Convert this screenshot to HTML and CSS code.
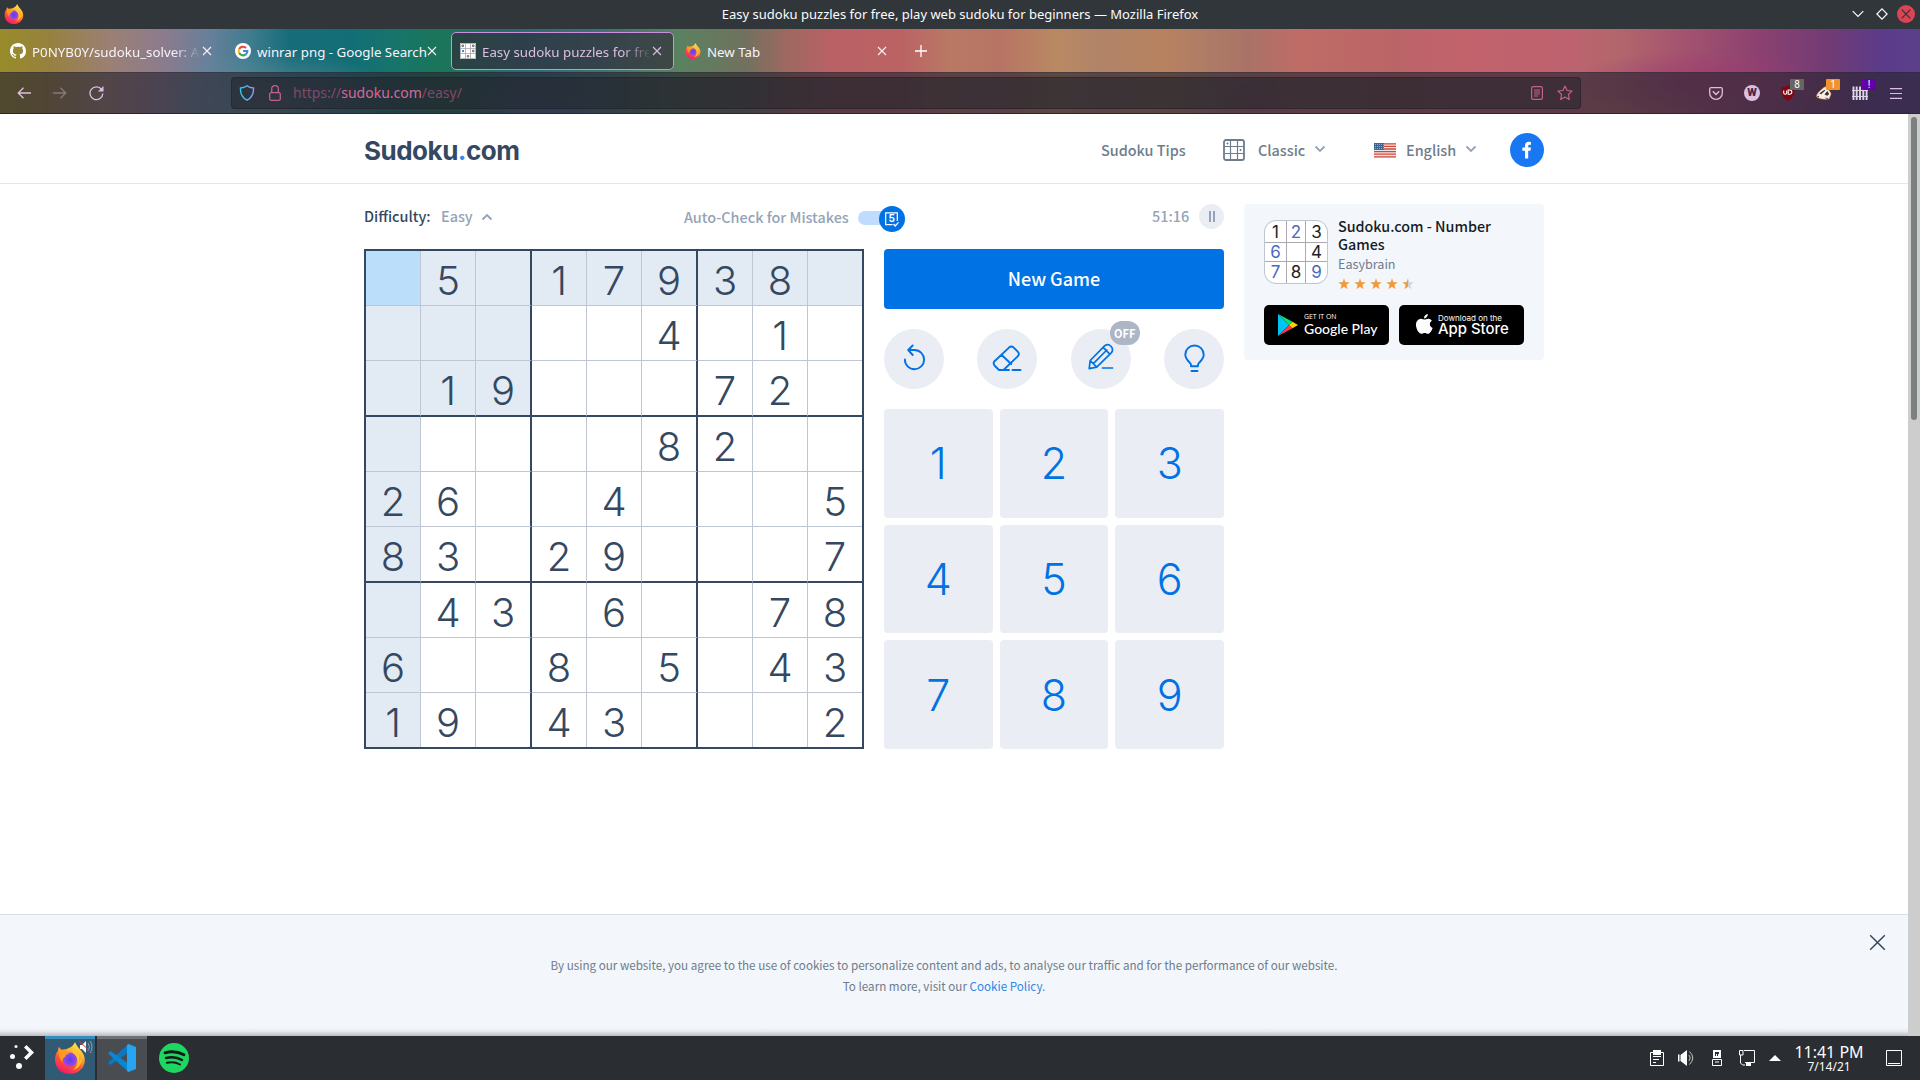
FILE: index.html
```html
<!DOCTYPE html>
<html lang="en">
<head>
<meta charset="utf-8">
<title>Easy sudoku puzzles for free, play web sudoku for beginners</title>
<link rel="stylesheet" href="styles.css">
</head>
<body>
<svg class="defs" width="0" height="0" aria-hidden="true">
  <defs>
    <linearGradient id="foxBody" x1="0.8" y1="0" x2="0.3" y2="1"><stop offset="0" stop-color="#fff44f"/><stop offset="0.35" stop-color="#ffb02a"/><stop offset="0.65" stop-color="#ff5634"/><stop offset="1" stop-color="#f5156c"/></linearGradient>
    <radialGradient id="foxGlobe"><stop offset="0" stop-color="#5a3fe0"/><stop offset="1" stop-color="#9b48f0"/></radialGradient>
    <symbol id="firefox" viewBox="0 0 32 32">
      <path fill="url(#foxBody)" d="M21 0c1 3 3 5 5.500 8 3.500 4 5 8 4 13-1.500 6.500-7.500 11-14.500 11C7.500 32 1 26 1 17.500c0-3.500 1-6.500 3-9 0-1 .4-2.500 1-3.500l2.500 3c1.300-.7 3-1 4.500-.8C15 6 19 5 21 0z"/>
      <circle cx="16" cy="17.500" r="7" fill="url(#foxGlobe)"/>
      <path fill="#ff9a1f" d="M5 8c4-1 8 0 10.500 3.500-3 .5-4 1.500-4 3-2 1-3.500 3-3 6C6 18 4 13 5 8z"/>
      <path fill="#ffc42e" d="M19 7c5 3 7.500 8 6 13 2-2 2.500-4 2.500-6 1.500 7-3 13-9 14 7-4 6.500-13 .5-17z"/>
    </symbol>
    <symbol id="close" viewBox="0 0 10 10"><path d="M1 1l8 8M9 1L1 9" fill="none" stroke="currentColor" stroke-width="1.100"/></symbol>
    <symbol id="chev" viewBox="0 0 12 8"><path d="M1.500 1.500L6 6l4.500-4.500" fill="none" stroke="currentColor" stroke-width="1.800"/></symbol>
    <symbol id="star" viewBox="0 0 12 12"><path d="M6 .3l1.450 4h4.200L8.300 6.900l1.250 4.300L6 8.700l-3.550 2.500L3.700 6.900.35 4.300h4.200z"/></symbol>
  </defs>
</svg>

<header class="titlebar">
  <svg class="app-icon" width="20" height="20"><use href="#firefox"/></svg>
  <span class="window-title">Easy sudoku puzzles for free, play web sudoku for beginners — Mozilla Firefox</span>
  <div class="window-controls">
    <svg width="12" height="8" viewBox="0 0 12 8"><path d="M.7 1.200L6 6.500l5.300-5.300" fill="none" stroke="#fcfcfc" stroke-width="1.200"/></svg>
    <svg width="12" height="12" viewBox="0 0 12 12"><path d="M6 .9L11.100 6 6 11.100.9 6z" fill="none" stroke="#fcfcfc" stroke-width="1.200"/></svg>
    <svg class="window-close" width="18" height="18" viewBox="0 0 18 18"><circle cx="9" cy="9" r="9" fill="#da4453"/><path d="M4.700 4.700l8.600 8.600M13.300 4.700l-8.600 8.600" stroke="#2f3439" stroke-width="1.200"/></svg>
  </div>
</header>

<section class="browser">
  <nav class="tabs">
    <div class="tab">
      <svg width="16" height="16" viewBox="0 0 16 16"><path fill="#fff" d="M8 0C3.580 0 0 3.580 0 8c0 3.540 2.290 6.530 5.470 7.590.4.070.55-.17.55-.38 0-.19-.01-.82-.01-1.490-2.010.37-2.530-.49-2.690-.94-.09-.23-.48-.94-.82-1.130-.28-.15-.68-.52-.01-.53.63-.01 1.080.58 1.230.82.72 1.210 1.870.87 2.330.66.070-.52.280-.87.510-1.070-1.780-.2-3.640-.89-3.640-3.950 0-.87.310-1.590.820-2.150-.08-.2-.36-1.020.080-2.120 0 0 .67-.21 2.200.82.640-.18 1.320-.27 2-.27s1.360.090 2 .27c1.530-1.040 2.200-.82 2.200-.82.440 1.100.160 1.920.080 2.120.51.560.82 1.270.82 2.150 0 3.070-1.870 3.750-3.650 3.950.290.250.540.730.540 1.480 0 1.070-.01 1.930-.01 2.200 0 .21.150.46.550.38A8.010 8.010 0 0016 8c0-4.420-3.580-8-8-8z"/></svg>
      <span class="tab-label fade">P0NYB0Y/sudoku_solver: A</span>
      <svg class="tab-close" width="10" height="10"><use href="#close"/></svg>
    </div>
    <div class="tab">
      <svg width="16" height="16" viewBox="0 0 16 16"><circle cx="8" cy="8" r="8" fill="#fff"/><g fill="none" stroke-width="2.100"><path stroke="#ea4335" d="M4.200 5.900A4.350 4.350 0 0 1 11 4.900"/><path stroke="#fbbc05" d="M4.200 10.100a4.350 4.350 0 0 1 0-4.200"/><path stroke="#34a853" d="M10.800 11.400a4.350 4.350 0 0 1-6.600-1.300"/><path stroke="#4285f4" d="M8 8h4.350a4.350 4.350 0 0 1-1.550 3.400"/></g></svg>
      <span class="tab-label full">winrar png - Google Search</span>
      <svg class="tab-close" width="10" height="10"><use href="#close"/></svg>
    </div>
    <div class="tab active">
      <svg width="16" height="16" viewBox="0 0 16 16"><path fill="#fff" d="M0 0h16v16H0z"/><path d="M.5.500h15v15H.5zM5.500 0v16M10.500 0v16M0 5.500h16M0 10.500h16" fill="none" stroke="#a6a6a6" stroke-width=".8"/><path d="M2 2h1.500v1.500H2zM12.500 2H14v1.500h-1.500zM12.500 7.200H14v1.500h-1.500zM7.200 12.500h1.500V14H7.200z" fill="none" stroke="#666" stroke-width=".9"/><path d="M2 7h2v2H2z" fill="#338de8"/></svg>
      <span class="tab-label fade">Easy sudoku puzzles for fre</span>
      <svg class="tab-close" width="10" height="10"><use href="#close"/></svg>
    </div>
    <div class="tab last-tab">
      <svg width="16" height="16"><use href="#firefox"/></svg>
      <span class="tab-label">New Tab</span>
      <svg class="tab-close" width="10" height="10"><use href="#close"/></svg>
    </div>
    <svg class="new-tab" width="12" height="12" viewBox="0 0 12 12"><path d="M6 0v12M0 6h12" stroke="#fff" stroke-width="1.300"/></svg>
  </nav>
  <div class="toolbar">
    <div class="nav-buttons">
      <svg width="14" height="12" viewBox="0 0 14 12"><path d="M6.500.7L1.200 6l5.300 5.300M1.200 6H14" fill="none" stroke="currentColor" stroke-width="1.300"/></svg>
      <svg class="dim" width="14" height="12" viewBox="0 0 14 12"><path d="M7.500.7L12.800 6l-5.300 5.300M12.800 6H0" fill="none" stroke="currentColor" stroke-width="1.300"/></svg>
      <svg width="15" height="15" viewBox="0 0 15 15"><path d="M12.600 3.500A6.400 6.400 0 1 0 13.800 7.500" fill="none" stroke="currentColor" stroke-width="1.300"/><path d="M14.500 0v5.500H9z" fill="currentColor"/></svg>
    </div>
    <div class="urlbar">
      <svg width="16" height="16" viewBox="0 0 16 16"><linearGradient id="sh" x2="1"><stop stop-color="#34c5f4"/><stop offset="1" stop-color="#9a96ee"/></linearGradient><path d="M8 .8c2 1.600 4 2.100 6.500 2.200.3 6-1.700 10-6.500 12.200C3.200 13 1.200 9 1.500 3 4 2.900 6 2.400 8 .8z" fill="none" stroke="url(#sh)" stroke-width="1.400"/></svg>
      <svg width="12" height="16" viewBox="0 0 12 16"><rect x=".7" y="7.700" width="10.600" height="7.600" rx="1.500" fill="none" stroke="currentColor" stroke-width="1.300"/><path d="M2.700 7.500V4a3.300 3.300 0 0 1 6.600 0v3.500" fill="none" stroke="currentColor" stroke-width="1.300"/></svg>
      <span class="url">https://<b>sudoku.com</b>/easy/</span>
      <svg width="12" height="14" viewBox="0 0 12 14"><rect x=".6" y=".6" width="10.800" height="12.800" rx="1.600" fill="none" stroke="currentColor" stroke-width="1.200"/><path d="M3 4h6M3 6h6M3 8h6M3 10h4" stroke="currentColor"/></svg>
      <svg width="16" height="16" viewBox="0 0 16 16"><path d="M8 1l2.100 4.500 4.900.6-3.600 3.400.9 5L8 12.100l-4.300 2.400.9-5L1 6.100l4.900-.6z" fill="none" stroke="currentColor" stroke-width="1.200" stroke-linejoin="round"/></svg>
    </div>
    <div class="extensions">
      <svg width="14" height="13" viewBox="0 0 14 13"><path d="M2 .7h10q1.300 0 1.300 1.300v4a6.300 6.300 0 0 1-12.600 0V2Q.7.700 2 .7z" fill="none" stroke="currentColor" stroke-width="1.300"/><path d="M3.800 4.300L7 7.500l3.200-3.200" fill="none" stroke="currentColor" stroke-width="1.400"/></svg>
      <span class="ext-w">W</span>
      <div class="ext"><svg width="16" height="16" viewBox="0 0 16 16"><path fill="#800610" d="M8 0c2 1.400 4 2 6.500 2 .4 7-1 11-6.500 14C2.500 13 1.100 9 1.500 2 4 2 6 1.400 8 0z"/><path d="M3.700 5.500v2.200a1.500 1.500 0 0 0 3 0V5.500M8.200 5v4.300h1.500a2.100 2.100 0 0 0 0-4.300z" fill="none" stroke="#fff" stroke-width="1.100"/></svg><i class="badge gray">8</i></div>
      <div class="ext"><svg width="16" height="16" viewBox="0 0 17 16"><path fill="#f4eee7" stroke="#e18a4d" stroke-width=".6" d="M.5 12C1 8 4 6 8 2.500l2-1.500 1 2c2 1 4 3 5 6l-2 5c-4 1-9 1-13.500-2z"/><path fill="#333" d="M3.500 8.500l5.500-4 .8.800-4.300 4zM9 9.500l3-3.500 2 3-2 2zM.5 12l2.500-1v1.500zM9 13l4 .4-1 1z"/></svg><i class="badge orange">1</i></div>
      <div class="ext"><svg width="16" height="16" viewBox="0 0 16 16"><path d="M1.500 1.500V15M4.700 1.500V15M8 1.500V15M11.300 1.500V15M14.600 1.500V15" stroke="#ddd5e3" stroke-width="1.900"/><path d="M0 5.500h16M0 11.500h16" stroke="#ddd5e3" stroke-width="1.100"/></svg><i class="badge purple">!</i></div>
      <svg width="12" height="11" viewBox="0 0 12 11"><path d="M0 .7h12M0 5.500h12M0 10.300h12" stroke="currentColor" stroke-width="1.200"/></svg>
    </div>
  </div>
</section>

<main class="viewport">
  <div class="page">
    <header class="site-header">
      <div class="wrap">
        <span class="logo">Sudoku<em>.</em>com</span>
        <span class="menu tips">Sudoku Tips</span>
        <span class="menu classic"><svg width="22" height="22" viewBox="0 0 22 22"><rect x="1" y="1" width="20" height="20" rx="2" fill="none" stroke="currentColor" stroke-width="1.800"/><path d="M7.500 1v20M14.500 1v20M1 7.500h20M1 14.500h20" stroke="currentColor" stroke-width="1.200"/><path d="M3.500 4.500h2M4.500 3.500v2M16.500 11h2M17.500 10v2" stroke="currentColor"/></svg>Classic<svg class="chev" width="12" height="8"><use href="#chev"/></svg></span>
        <span class="menu english"><svg width="22" height="15" viewBox="0 0 22 15"><path fill="#f4e6e4" d="M0 0h22v15H0z"/><path d="M0 .8h22M0 3.400h22M0 6h22M0 8.600h22M0 11.200h22M0 13.900h22" stroke="#cb4a3e" stroke-width="1.300"/><path fill="#3d6792" d="M0 0h10v7H0z"/><path d="M1 1.500h9M1 3.500h9M1 5.500h9" stroke="#a5bacf" stroke-width=".8" stroke-dasharray="1 1"/></svg>English<svg class="chev" width="12" height="8"><use href="#chev"/></svg></span>
        <svg class="facebook" width="34" height="34" viewBox="0 0 34 34"><circle cx="17" cy="17" r="17" fill="#1877f2"/><path fill="#fff" d="M15 25.500v-7.700h-2.600v-3.200H15v-1.900c0-2.500 1.500-3.900 3.800-3.900l2.200.2v2.700h-1.300c-1.200 0-1.500.7-1.500 1.500v1.400h2.800l-.5 3.200h-2.300v7.700z"/></svg>
      </div>
    </header>
    <div class="wrap content">
      <section class="game">
        <div class="options">
          <span class="difficulty">Difficulty:</span><span class="level">Easy</span><svg class="chev up" width="12" height="8"><use href="#chev"/></svg>
          <span class="autocheck">Auto-Check for Mistakes</span>
          <span class="toggle"><svg width="26" height="26" viewBox="0 0 26 26"><circle cx="13" cy="13" r="13" fill="#0072e3"/><path d="M13.500 18.700H6.700V6.900h11.600v8" fill="none" stroke="#fff" stroke-width="1.200"/><path d="M14.500 18l1.700 2 3.300-3.600" fill="none" stroke="#fff" stroke-width="1.300"/><text x="12.600" y="16.300" text-anchor="middle" class="toggle-digit">5</text></svg></span>
          <span class="timer">51:16</span>
          <span class="pause"><i></i><i></i></span>
        </div>
        <div class="play">
          <div class="board" id="board"></div>
          <div class="controls">
            <div class="new-game">New Game</div>
            <div class="tools">
              <span class="tool"><svg width="60" height="60" viewBox="0 0 60 60"><path d="M20.900 30.500A9.600 9.600 0 1 0 30.500 21H25M28.700 16.500L24.200 21l4.500 5" /></svg></span>
              <span class="tool"><svg width="60" height="60" viewBox="0 0 60 60"><path d="M32 18.600q2.400-2 4.700 0l4 4q2.300 2.400 0 4.700L26.500 41H22l-4.500-4.500q-1.700-2.200 0-4.300zM24.700 26l9.500 9M22 41h10M35.500 41H43.500"/></svg></span>
              <span class="tool pencil"><svg width="60" height="60" viewBox="0 0 60 60"><path d="M18.200 39.700l1-8.200L33.800 16.700q3.400-2.300 6.400.8 2.500 3 .3 6.200L25.700 38.200zM19.200 31.500l6.500 6.700M22.300 34.600L35.800 21M32.200 18.300l6.800 7M18.200 39.700l7.500-1.500M31.500 39H41.500"/></svg><i class="off">OFF</i></span>
              <span class="tool"><svg width="60" height="60" viewBox="0 0 60 60"><path d="M27 37.200v-1.500c0-2-5.700-4.700-5.700-10A9.100 9.100 0 0 1 39.700 25.700c0 5.300-5.700 8-5.700 10v1.500zM27.500 42h6"/></svg></span>
            </div>
            <div class="numpad"><span>1</span><span>2</span><span>3</span><span>4</span><span>5</span><span>6</span><span>7</span><span>8</span><span>9</span></div>
          </div>
        </div>
      </section>
      <aside class="app-card">
        <div class="app-info">
          <div class="mini"><span>1</span><span class="b">2</span><span>3</span><span class="b">6</span><span></span><span>4</span><span class="b">7</span><span>8</span><span class="b">9</span></div>
          <div class="app-text">
            <strong>Sudoku.com - Number Games</strong>
            <span>Easybrain</span>
            <div class="stars"><svg width="12" height="12"><use href="#star"/></svg><svg width="12" height="12"><use href="#star"/></svg><svg width="12" height="12"><use href="#star"/></svg><svg width="12" height="12"><use href="#star"/></svg><svg width="12" height="12" viewBox="0 0 12 12"><linearGradient id="half"><stop offset=".5" stop-color="#f29a38"/><stop offset=".5" stop-color="#ced4e0"/></linearGradient><path fill="url(#half)" d="M6 .3l1.450 4h4.200L8.300 6.900l1.250 4.300L6 8.700l-3.550 2.500L3.700 6.900.35 4.300h4.200z"/></svg></div>
          </div>
        </div>
        <div class="stores">
          <span class="store play-store"><svg width="20" height="22" viewBox="0 0 20 22"><path fill="#00c3f5" d="M0 0v22L11 11z"/><path fill="#00e676" d="M0 0l14.500 7.700L11 11z"/><path fill="#f8394d" d="M0 22l14.500-7.700L11 11z"/><path fill="#ffce00" d="M14.500 7.700L20 11l-5.500 3.300L11 11z"/></svg><span><small>GET IT ON</small><b>Google Play</b></span></span>
          <span class="store app-store"><svg width="17" height="20" viewBox="0 0 17 20"><path fill="#fff" d="M11.800 0c.2 2-1.700 4.500-3.800 4.400C7.800 2.300 9.700.3 11.800 0zM8.700 5.600c.8 0 2-.9 3.600-.8 1.500.1 2.800.8 3.600 1.900-3 1.800-2.600 6 .7 7.200-.8 2.400-2.600 5.800-4.600 5.900-1.300 0-1.700-.8-3.300-.8s-2.100.8-3.300.8C3 19.800 0 15 0 11c0-4 2.500-6.100 4.900-6.200 1.500 0 2.900.8 3.800.8z"/></svg><span><small>Download on the</small><b>App Store</b></span></span>
        </div>
      </aside>
    </div>
    <footer class="cookie">
      <p>By using our website, you agree to the use of cookies to personalize content and ads, to analyse our traffic and for the performance of our website.<br>To learn more, visit our <a>Cookie Policy</a>.</p>
      <svg class="cookie-close" width="17" height="17" viewBox="0 0 17 17"><path d="M1.200 1.200l14.600 14.600M15.800 1.200L1.200 15.800" stroke="#344861" stroke-width="1.500"/></svg>
    </footer>
  </div>
  <div class="scrollbar"><i></i></div>
</main>

<footer class="taskbar">
  <span class="launcher"><svg width="24" height="24" viewBox="0 0 24 24" fill="#fcfcfc"><circle cx="6" cy="3.500" r="1.500"/><circle cx="2.500" cy="13.500" r="2.500"/><circle cx="9" cy="23" r="3"/><path d="M14 4.500L16.500 2l7.500 7.500-7.500 7.500-2.500-2.500 5-5z"/></svg></span>
  <span class="task focus"><svg width="32" height="32"><use href="#firefox"/></svg><svg class="muted" width="15" height="14" viewBox="0 0 15 14"><path fill="#fff" d="M2 5h2l4-4v12L4 9H2z"/><path d="M10 3q3 4 0 8M12 1q4 6 0 12" fill="none" stroke="#8aa0af"/><path d="M1 1l13 12" stroke="#d63b4c"/></svg></span>
  <span class="task"><svg width="28" height="28" viewBox="0 0 28 28"><path d="M0 18.500L20.500 0v8.500L2.500 21z" fill="#0879c2"/><path d="M0 9.500L20.500 28v-8.500L2.500 7z" fill="#0b86d3"/><path d="M20.500 0L28 3v22l-7.500 3-1.500-1V1z" fill="#27a5f3"/></svg></span>
  <span class="spotify"><svg width="30" height="30" viewBox="0 0 30 30"><circle cx="15" cy="15" r="15" fill="#1ed760"/><g fill="none" stroke="#15191c" stroke-linecap="round"><path d="M6 9.800q10-2.800 19 2" stroke-width="2.800"/><path d="M7 15q9-2.300 16 2" stroke-width="2.400"/><path d="M7.800 19.800q7.500-1.600 13.200 1.700" stroke-width="1.900"/></g></svg></span>
  <div class="tray">
    <svg width="14" height="16" viewBox="0 0 14 16"><path d="M.5 2.500h13v13H.5zM3 6.500h8M3 9.500h6M3 12.500h3" fill="none" stroke="#fff"/><path fill="#fff" d="M3 0h8v5H3z"/></svg>
    <svg width="17" height="16" viewBox="0 0 17 16"><path fill="#fff" d="M0 4.500h1.500v7H0zM2.500 5L9 0v16l-6.500-5z"/><path d="M11 5q2.500 3 0 6M11.500 1.500q6.500 6.500 0 13" fill="none" stroke="#c4c6c8"/></svg>
    <svg class="usb" width="10" height="16" viewBox="0 0 10 16"><path fill="#fff" fill-rule="evenodd" d="M1 0h8v8H1zM3 2v4h1V4h1v2h1V4h1V2z"/><path d="M.5 9.500h9v6h-9zM3 12h4" fill="none" stroke="#fff"/></svg>
    <svg width="16" height="16" viewBox="0 0 16 16"><path d="M5 .5h10.500v12H6M.5.500h3.500v4.500H.5zM1.500 5v8l2 2H6" fill="none" stroke="#fff"/><path fill="#fff" d="M7 13h5v3H7z"/></svg>
    <svg width="12" height="6" viewBox="0 0 12 6"><path fill="#fff" d="M6 0l6 6H0z"/></svg>
    <div class="clock"><span>11:41 PM</span><small>7/14/21</small></div>
    <svg width="16" height="16" viewBox="0 0 16 16"><path d="M.5.500h15v15H.5zM2 13.500h12" fill="none" stroke="#fff"/></svg>
  </div>
</footer>
<script src="board.js"></script>
</body>
</html>
```
FILE: styles.css
```css
* { box-sizing: border-box; }
body { margin: 0; width: 1920px; height: 1080px; overflow: hidden; display: flex; flex-direction: column; background: #fff; font-family: "Noto Sans", sans-serif; }
svg { display: block; flex: none; }
i, em { font-style: normal; }
.defs { position: absolute; }

.titlebar { height: 29px; flex: none; display: grid; grid-template-columns: 1fr auto 1fr; align-items: center; background: #31363b; color: #fcfcfc; font-size: 13px; }
.window-title { line-height: 18px; margin-top: -2px; }
.app-icon { margin-left: 4px; margin-top: -1px; }
.window-controls { display: flex; align-items: center; justify-content: flex-end; gap: 12px; padding-right: 5px; margin-top: -1px; }
.window-close { margin-left: -3px; }

.browser { height: 85px; flex: none; border-bottom: 1px solid #2a2531; color: #dfbfe0;
  background:
    radial-gradient(ellipse 130px 50px at 270px 72px, #5e8b9a 0%, transparent 100%),
    radial-gradient(ellipse 80px 45px at 540px 80px, #3a6a8e, transparent),
    radial-gradient(ellipse 60px 30px at 1255px 72px, #b0616a, transparent),
    radial-gradient(ellipse 130px 35px at 1700px 55px, #9e3b71cc, transparent),
    linear-gradient(90deg, #978c29 0, #97813f 50px, #9b8074 110px, #8b7b8e 165px, #66809a 210px, #3f7c8e 250px, #176c7a 290px, #126e76 350px, #17756a 400px, #1b7558 440px, #276b71 520px, #3d7274 600px, #5a8260 680px, #71715e 745px, #9c6960 785px, #b96165 830px, #bb6264 900px, #b97964 950px, #b77464 1000px, #b98963 1057px, #b18468 1100px, #b88260 1166px, #ad7b66 1210px, #aa7267 1250px, #bf6c66 1300px, #bb6468 1400px, #c2636b 1450px, #bf626f 1560px, #b2666c 1620px, #a2516f 1690px, #8b4170 1760px, #713b75 1830px, #5c3b8a 1880px, #5b408b 1920px); }
.tabs { height: 43px; display: flex; align-items: center; padding-left: 1px; color: #f8f3fa; font-size: 13.3px; }
.tab { width: 225px; height: 38px; flex: none; display: flex; align-items: center; padding: 0 14px 0 9px; border-radius: 5px; }
.tab.active { width: 223px; border: 1px solid #cd8fe0; background: #302b37a8; color: #ddbfe2; padding-right: 11px; padding-left: 8px; }
.tab.last-tab { padding: 0 12px 0 11px; }
.tab-label { flex: 1; min-width: 0; margin-left: 6px; white-space: nowrap; overflow: hidden; line-height: 20px; padding-top: 2px; }
.tab-label.full { overflow: visible; }
.full + .tab-close { margin-left: 2px; }
.fade { mask-image: linear-gradient(90deg, #000 84%, transparent 102%); }
.tab-close { margin-left: 3px; }
.new-tab { margin-left: 16px; }
.toolbar { height: 41px; display: flex; align-items: center; background: #2a2531a6; border-top: 1px solid #2a253150; }
.nav-buttons { width: 231px; padding-left: 17px; display: flex; align-items: center; gap: 22px; flex: none; }
.dim { opacity: .4; }
.urlbar { width: 1350px; height: 32px; flex: none; display: flex; align-items: center; padding: 0 7px; gap: 14px; background: #22242b88; border: 1px solid #201f2780; border-radius: 4px; color: #c4618f; }
.url { flex: 1; font-size: 14px; line-height: 20px; color: #82486b; margin: -1px 0 0 -2px; }
.url b { font-weight: 400; color: #d5699b; }
.extensions { flex: 1; display: flex; align-items: center; gap: 20px; padding-left: 128px; }
.extensions > :last-child { margin-left: 2px; }
.ext-w { width: 16px; height: 16px; margin-left: 1px; border-radius: 50%; background: #dfbfe0; color: #47284b; font: 900 11px/16px Roboto, sans-serif; text-align: center; }
.ext { position: relative; }
.badge { position: absolute; top: -6px; left: 10px; width: 14px; height: 11px; border-radius: 1px; color: #fff; font: 10px/11px Roboto, sans-serif; text-align: center; }
.gray { background: #666; } .orange { background: #ef9428; } .purple { background: #6300a8; }

.viewport { height: 922px; flex: none; display: flex; font-family: "Noto Sans CJK JP", sans-serif; }
.page { width: 1908px; display: flex; flex-direction: column; }
.scrollbar { width: 12px; background: #cdcdcd; padding: 3px; }
.scrollbar i { display: block; width: 6px; height: 303px; border-radius: 3px; background: #7c807f; }
.wrap { width: 1180px; margin: 0 auto; display: flex; }
.site-header { height: 70px; border-bottom: 1px solid #e2e6f1; }
.site-header .wrap { height: 72px; align-items: center; }
.logo { width: 737px; color: #344861; font: 700 26px/40px Inter, sans-serif; letter-spacing: -.5px; margin-top: 1px; }
.logo em { color: #338de8; }
.menu { display: flex; align-items: center; color: #6e7c8c; font-size: 14.4px; font-weight: 500; line-height: 24px; white-space: nowrap; }
.chev { color: #94a3b7; margin: -2px 0 0 9px; }
.tips { width: 122px; } .classic { width: 151px; } .classic svg:first-child { margin-right: 13px; }
.english { width: 136px; } .english svg:first-child { margin-right: 10px; }

.content { flex: 1; gap: 20px; padding-top: 20px; align-items: flex-start; }
.game { width: 860px; }
.options { height: 45px; display: flex; align-items: flex-start; color: #94a3b7; font-size: 14.4px; font-weight: 500; line-height: 24px; white-space: nowrap; }
.difficulty { color: #344861; width: 77px; }
.level { width: 31px; }
.options .chev { margin-top: 9px; } .up { transform: rotate(180deg); }
.autocheck { margin-left: 191px; width: 174px; padding-top: 1px; }
.toggle { width: 47px; height: 14px; margin-top: 7px; background: #bfdcff; border-radius: 7px; display: flex; align-items: center; justify-content: flex-end; }
.toggle svg { margin-top: 2px; }
.toggle-digit { fill: #fff; font: 700 10px Inter, sans-serif; }
.timer { margin-left: auto; width: 47px; }
.pause { width: 25px; height: 25px; border-radius: 50%; background: #eaedf4; display: flex; justify-content: center; align-items: center; gap: 2px; }
.pause i { width: 2px; height: 11px; background: #94a3b7; }
.play { display: flex; gap: 20px; }
.board { width: 500px; height: 500px; border: 2px solid #344861; display: grid; grid-template: 55px 55px 56px 55px 55px 56px 55px 55px 54px / 55px 55px 56px 55px 55px 56px 55px 55px 54px; }
.cell { border: solid #bec6d4; border-width: 0 1px 1px 0; color: #344861; font: 300 40px/60px Inter, sans-serif; text-align: center; min-width: 0; min-height: 0; }
.cell.hl { background: #e2eaf3; } .cell.sel { background: #bbdefb; }
.cell.right { border-right: 2px solid #344861; } .cell.bottom { border-bottom: 2px solid #344861; }
.cell.last { border-right: 0; } .cell.end { border-bottom: 0; }
.controls { width: 340px; }
.new-game { height: 60px; background: #0072e3; color: #fff; border-radius: 4px; text-align: center; font-size: 18px; font-weight: 500; line-height: 59px; }
.tools { margin: 20px 0; display: flex; justify-content: space-between; }
.tool { width: 60px; height: 60px; border-radius: 50%; background: #eaedf4; position: relative; }
.tool path { fill: none; stroke: #0072e3; stroke-width: 1.900; stroke-linejoin: round; stroke-linecap: round; }
.pencil path { stroke-width: 1.700; }
.off { position: absolute; top: -8px; left: 39px; width: 30px; height: 24px; border-radius: 12px; background: #adb6c4; color: #fff; font-size: 11px; font-weight: 700; line-height: 24px; text-align: center; }
.numpad { height: 340px; display: grid; grid-template: repeat(3, 1fr) / repeat(3, 1fr); gap: 7px; }
.numpad span { background: #eaedf4; border-radius: 4px; color: #0072e3; display: grid; place-items: center; font: 300 43px/1 Inter, sans-serif; padding-top: 1px; }

.app-card { width: 300px; height: 156px; background: #f3f6fb; border-radius: 4px; padding: 16px 20px; }
.app-info { display: flex; height: 85px; gap: 10px; }
.mini { width: 64px; height: 64px; border: 1px solid #bec6d4; border-radius: 12px; overflow: hidden; display: grid; grid-template: 21px 18px 21px / 21px 18px 21px; gap: 1px; background: #aaaab0; }
.mini span { background: #fff; color: #202124; font: 400 17px/23px Inter, sans-serif; text-align: center; min-height: 0; }
.mini span:nth-child(n+4) { line-height: 19px; }
.mini span:nth-child(n+7) { line-height: 20px; }
.mini .b { color: #4b69bd; }
.app-text { width: 180px; display: flex; flex-direction: column; margin-top: -3px; color: #6e7c8c; font-size: 12.600px; line-height: 20px; }
.app-text strong { color: #141c26; font-size: 14.300px; line-height: 18px; font-weight: 500; margin-bottom: 1px; }
.stars { display: flex; gap: 4px; fill: #f29a38; margin-top: 4px; }
.stores { display: flex; gap: 10px; }
.store { width: 125px; height: 40px; border-radius: 5px; background: #000; color: #fff; display: flex; align-items: center; }
.store small, .store b { display: block; white-space: nowrap; }
.play-store { padding-left: 14px; gap: 6px; font-family: "Open Sans", sans-serif; }
.play-store small { font-size: 6.900px; line-height: 9px; } .play-store b { font: 500 14px/16px Lato, sans-serif; margin-bottom: 2px; }
.app-store { padding-left: 17px; gap: 5px; font-family: Inter, sans-serif; }
.app-store small { font-size: 8px; line-height: 8px; } .app-store b { font-size: 14.900px; font-weight: 500; line-height: 15px; }
.app-store svg { margin-top: -2px; }

.cookie { height: 122px; border-top: 1px solid #d8e0ec; position: relative; background: linear-gradient(#f3f6fb 0 93%, #e8ebf0 96%, #b9bdc1 100%); color: #6e7c8c; font-size: 11.650px; line-height: 21px; text-align: center; padding-top: 39px; padding-right: 20px; }
.cookie p { margin: 0; } .cookie a { color: #2e86e5; }
.cookie-close { position: absolute; right: 22px; top: 19px; }

.taskbar { height: 44px; flex: none; display: flex; background: #2a2e32; color: #fcfcfc; }
.launcher { width: 45px; padding: 7px 0 0 10px; height: 44px; }
.launcher svg { overflow: visible; }
.task { width: 50px; margin-right: 2px; background: #494c50; border-top: 3px solid #6f7377; display: grid; place-items: center; position: relative; }
.task.focus { background: #315b75; border-color: #3a8dba; }
.task svg { margin-top: -3px; }
.task .muted { position: absolute; left: 33px; top: 4px; }
.spotify { padding: 7px 0 0 10px; }
.tray { margin-left: auto; display: flex; align-items: center; gap: 14px; padding-right: 18px; }
.usb { margin: 0 3px; }
.clock { width: 70px; margin: 0 8px 0 -1px; text-align: center; font-size: 16px; line-height: 16px; display: flex; flex-direction: column; white-space: nowrap; }
.clock small { font-size: 12px; line-height: 13px; }
```
FILE: board.js
```js
const rows = [
  ".5.17938.",
  ".....4.1.",
  ".19...72.",
  ".....82..",
  "26..4...5",
  "83.29...7",
  ".43.6..78",
  "6..8.5.43",
  "19.43...2"
];
const board = document.getElementById("board");
rows.forEach((row, r) => {
  [...row].forEach((value, c) => {
    const cell = document.createElement("div");
    cell.className = "cell";
    if (r === 0 || c === 0 || (r < 3 && c < 3)) cell.classList.add("hl");
    if (r === 0 && c === 0) cell.classList.add("sel");
    if (c === 2 || c === 5) cell.classList.add("right");
    if (r === 2 || r === 5) cell.classList.add("bottom");
    if (c === 8) cell.classList.add("last");
    if (r === 8) cell.classList.add("end");
    cell.textContent = value === "." ? "" : value;
    board.appendChild(cell);
  });
});
```
